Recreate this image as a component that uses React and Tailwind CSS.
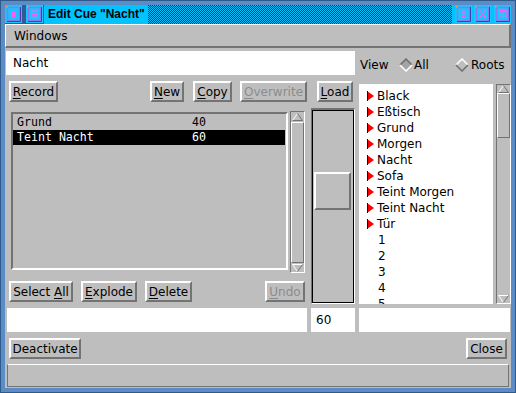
import React from 'react';

const MAG = '#ff5cf5';

function TitleBtn({ kind }) {
  return (
    <svg width="17" height="18" viewBox="0 0 17 18" className="shrink-0">
      <rect width="17" height="18" fill="#19c6fb" />
      <rect x="2.5" y="2.5" width="12" height="13" fill="none" stroke="#8a78f4" strokeWidth="1.5" />
      <path d="M2 16.5 H15.5 V2" stroke="#4a3cb0" fill="none" />
      <rect x="1" y="1" width="1.5" height="1.5" fill="#f0a040" />
      {kind === 'dot' && (
        <g fill={MAG}>
          <rect x="6" y="7" width="5" height="4" />
          <rect x="7" y="6" width="3" height="6" />
        </g>
      )}
      {kind === 'lines' && (
        <g fill={MAG}>
          <rect x="5" y="5.5" width="7" height="1.5" />
          <rect x="5" y="8.5" width="7" height="1.5" />
          <rect x="5" y="11.5" width="7" height="1.5" />
        </g>
      )}
      {kind === 'vmax' && (
        <g fill={MAG}>
          <polygon points="8.5,4.5 11,7.5 6,7.5" />
          <polygon points="8.5,13.5 11,10.5 6,10.5" />
          <rect x="7.8" y="7" width="1.5" height="4" />
        </g>
      )}
      {kind === 'close' && (
        <g fill={MAG}>
          <rect x="5" y="5.5" width="2" height="2" />
          <rect x="10" y="5.5" width="2" height="2" />
          <rect x="7.5" y="8" width="2" height="2" />
          <rect x="5" y="10.5" width="2" height="2" />
          <rect x="10" y="10.5" width="2" height="2" />
        </g>
      )}
      {kind === 'max' && (
        <g fill="none" stroke={MAG} strokeWidth="1.2">
          <path d="M5 5.5 H12 V13" />
          <path d="M5 8 H9.5 V13" />
          <path d="M5 10.5 H7 V13" />
        </g>
      )}
    </svg>
  );
}

function Btn({ className = '', disabled, children }) {
  return (
    <div
      className={`h-[21px] shrink-0 flex items-center justify-center border-2 border-t-white border-l-white border-b-[#737373] border-r-[#737373] bg-[#bebebe] text-[12px] leading-none ${disabled ? 'text-[#8c8c8c]' : 'text-black'} ${className}`}
    >
      <span className="whitespace-pre">{children}</span>
    </div>
  );
}

function U({ children }) {
  return <span className="underline underline-offset-2">{children}</span>;
}

function ArrowUp() {
  return (
    <svg width="11" height="8" viewBox="0 0 11 8">
      <polygon points="0.5,7.5 5.5,0.5 10.5,7.5" fill="#bebebe" />
      <line x1="0.5" y1="7.5" x2="5.5" y2="0.5" stroke="#ffffff" />
      <line x1="5.5" y1="0.5" x2="10.5" y2="7.5" stroke="#737373" />
      <line x1="0.5" y1="7.5" x2="10.5" y2="7.5" stroke="#737373" />
    </svg>
  );
}

function ArrowDown() {
  return (
    <svg width="11" height="8" viewBox="0 0 11 8">
      <polygon points="0.5,0.5 10.5,0.5 5.5,7.5" fill="#bebebe" />
      <line x1="0.5" y1="0.5" x2="10.5" y2="0.5" stroke="#ffffff" />
      <line x1="0.5" y1="0.5" x2="5.5" y2="7.5" stroke="#ffffff" />
      <line x1="10.5" y1="0.5" x2="5.5" y2="7.5" stroke="#737373" />
    </svg>
  );
}

function Diamond({ on }) {
  const tl = on ? '#6e6e6e' : '#ffffff';
  const br = on ? '#ffffff' : '#6e6e6e';
  return (
    <svg width="14" height="14" viewBox="0 0 14 14" className="shrink-0">
      <polygon points="7,1 13,7 7,13 1,7" fill={on ? '#a4a4a4' : '#bebebe'} />
      <polyline points="1,7 7,1 13,7" fill="none" stroke={tl} strokeWidth="1.5" />
      <polyline points="1,7 7,13 13,7" fill="none" stroke={br} strokeWidth="1.5" />
    </svg>
  );
}

function Marker() {
  return (
    <svg width="7" height="10" viewBox="0 0 7 10">
      <polygon points="0,0 7,5 0,10" fill="#ff0000" />
      <line x1="0.5" y1="0" x2="0.5" y2="10" stroke="#400000" />
    </svg>
  );
}

export default function App() {
  const cues = ['Black', 'Eßtisch', 'Grund', 'Morgen', 'Nacht', 'Sofa', 'Teint Morgen', 'Teint Nacht', 'Tür'];
  const nums = ['1', '2', '3', '4', '5'];

  return (
    <div className="w-[516px] h-[393px] bg-[#5b8cc5] border border-[#2f5a8c] flex flex-col pt-[4px] px-[4px] pb-[4px] overflow-hidden font-['DejaVu_Sans',sans-serif] text-black">
      {/* title bar */}
      <div className="h-[19px] shrink-0 flex bg-[#2d5d93]">
        <TitleBtn kind="dot" />
        <div className="w-[4px]" />
        <TitleBtn kind="lines" />
        <div className="ml-[1px] w-[104px] bg-[#00c3ff] flex items-center pl-[4px] pb-[1px] font-['Liberation_Sans',sans-serif] font-bold text-[12px] whitespace-nowrap">
          Edit Cue "Nacht"
        </div>
        <div className="w-[305px] bg-[image:repeating-conic-gradient(#00c3ff_0_25%,#083a58_0_50%)] bg-[length:2px_2px]" />
        <div className="flex-1 bg-[#00c3ff] flex items-start pl-[3px]">
          <TitleBtn kind="vmax" />
          <div className="w-[2px]" />
          <TitleBtn kind="close" />
          <div className="w-[3px]" />
          <TitleBtn kind="max" />
        </div>
      </div>

      {/* client */}
      <div className="flex-1 bg-[#bebebe] flex flex-col text-[12px]">
        <div className="h-[24px] shrink-0 flex items-center pl-[8px] border-t border-l border-t-white border-l-white border-b-2 border-r-2 border-b-[#737373] border-r-[#737373]">
          Windows
        </div>

        <div className="mt-[3px] h-[24px] shrink-0 flex">
          <div className="ml-[1px] w-[349px] bg-white flex items-center pl-[7px]">Nacht</div>
          <div className="flex items-center pt-[4px] pl-[5px]">
            <span className="w-[39px]">View</span>
            <Diamond on />
            <span className="w-[42px] pl-[1px]">All</span>
            <Diamond />
            <span className="pl-[2px]">Roots</span>
          </div>
        </div>

        {/* main area */}
        <div className="mt-[6px] h-[223px] shrink-0 flex">
          {/* column A */}
          <div className="ml-[4px] w-[299px] flex flex-col">
            <div className="flex">
              <Btn className="w-[49px]"><U>R</U>ecord</Btn>
              <Btn className="ml-[92px] w-[34px]"><U>N</U>ew</Btn>
              <Btn className="ml-[9px] w-[39px]"><U>C</U>opy</Btn>
              <Btn className="ml-[8px] w-[67px]" disabled><U>O</U>verwrite</Btn>
            </div>
            <div className="mt-[9px] h-[162px] flex">
              <div className="ml-[2px] mt-[1px] w-[277px] h-[158px] border-2 border-t-[#737373] border-l-[#737373] border-b-white border-r-white pt-[1px] font-['DejaVu_Sans_Mono',monospace] text-[11.6px]">
                <div className="h-[15px] flex items-center pl-[4px]">
                  <span className="w-[175px]">Grund</span>
                  <span>40</span>
                </div>
                <div className="h-[15px] flex items-center pl-[4px] bg-black text-white mr-[1px]">
                  <span className="w-[175px]">Teint Nacht</span>
                  <span>60</span>
                </div>
              </div>
              <div className="ml-[2px] w-[15px] h-full flex flex-col border border-t-[#737373] border-l-[#737373] border-b-white border-r-white">
                <div className="h-[9px] flex justify-center items-end"><ArrowUp /></div>
                <div className="flex-1 mt-[1px] border border-t-white border-l-white border-b-[#737373] border-r-[#737373]" />
                <div className="h-[9px] flex justify-center items-start pt-[1px]"><ArrowDown /></div>
              </div>
            </div>
            <div className="mt-[8px] flex">
              <Btn className="w-[64px]">Select <U>A</U>ll</Btn>
              <Btn className="ml-[8px] w-[56px]"><U>E</U>xplode</Btn>
              <Btn className="ml-[8px] w-[47px]"><U>D</U>elete</Btn>
              <Btn className="ml-[73px] w-[40px]" disabled><U>U</U>ndo</Btn>
            </div>
          </div>

          {/* column B: slider */}
          <div className="ml-[3px] w-[44px] flex flex-col">
            <Btn className="ml-[6px] w-[36px]"><U>L</U>oad</Btn>
            <div className="mt-[6px] h-[196px] w-[44px] border-t-2 border-l border-b border-r border-t-[#737373] border-l-[#737373] border-b-white border-r-white">
              <div className="h-full border border-black flex flex-col">
                <div className="mt-[61px] ml-[1px] w-[37px] h-[38px] border-2 border-t-white border-l-white border-b-[#737373] border-r-[#737373]" />
              </div>
            </div>
          </div>

          {/* right list */}
          <div className="ml-[4px] w-[152px] mt-[3px] h-[220px] flex">
            <div className="w-[134px] h-full bg-white overflow-hidden pt-[4px]">
              {cues.map((c) => (
                <div key={c} className="h-[16px] flex items-center pl-[8px] whitespace-nowrap">
                  <span className="w-[7px] flex"><Marker /></span>
                  <span className="ml-[3px]">{c}</span>
                </div>
              ))}
              {nums.map((n) => (
                <div key={n} className="h-[15.9px] flex items-center pl-[8px]">
                  <span className="w-[7px]" />
                  <span className="ml-[4px]">{n}</span>
                </div>
              ))}
            </div>
            <div className="ml-[3px] w-[15px] h-full flex flex-col border border-t-[#737373] border-l-[#737373] border-b-white border-r-white">
              <div className="h-[8px] flex justify-center items-end"><ArrowUp /></div>
              <div className="h-[45px] border border-t-white border-l-white border-b-[#737373] border-r-[#737373]" />
              <div className="flex-1" />
              <div className="h-[8px] flex justify-center items-start"><ArrowDown /></div>
            </div>
          </div>
        </div>

        {/* value fields */}
        <div className="mt-[4px] h-[24px] shrink-0 flex">
          <div className="ml-[2px] w-[300px] bg-white" />
          <div className="ml-[4px] w-[44px] bg-white flex items-center pl-[5px]">60</div>
          <div className="ml-[4px] w-[151px] bg-white" />
        </div>

        <div className="mt-[6px] flex">
          <Btn className="ml-[4px] w-[72px]">Deactivate</Btn>
          <Btn className="ml-auto mr-[4px] w-[41px]">Close</Btn>
        </div>

        <div className="mt-[5px] ml-[2px] w-[502px] h-[23px] shrink-0 border border-t-white border-l-[#737373] border-b-[#737373] border-r-[#737373]" />
      </div>
    </div>
  );
}
